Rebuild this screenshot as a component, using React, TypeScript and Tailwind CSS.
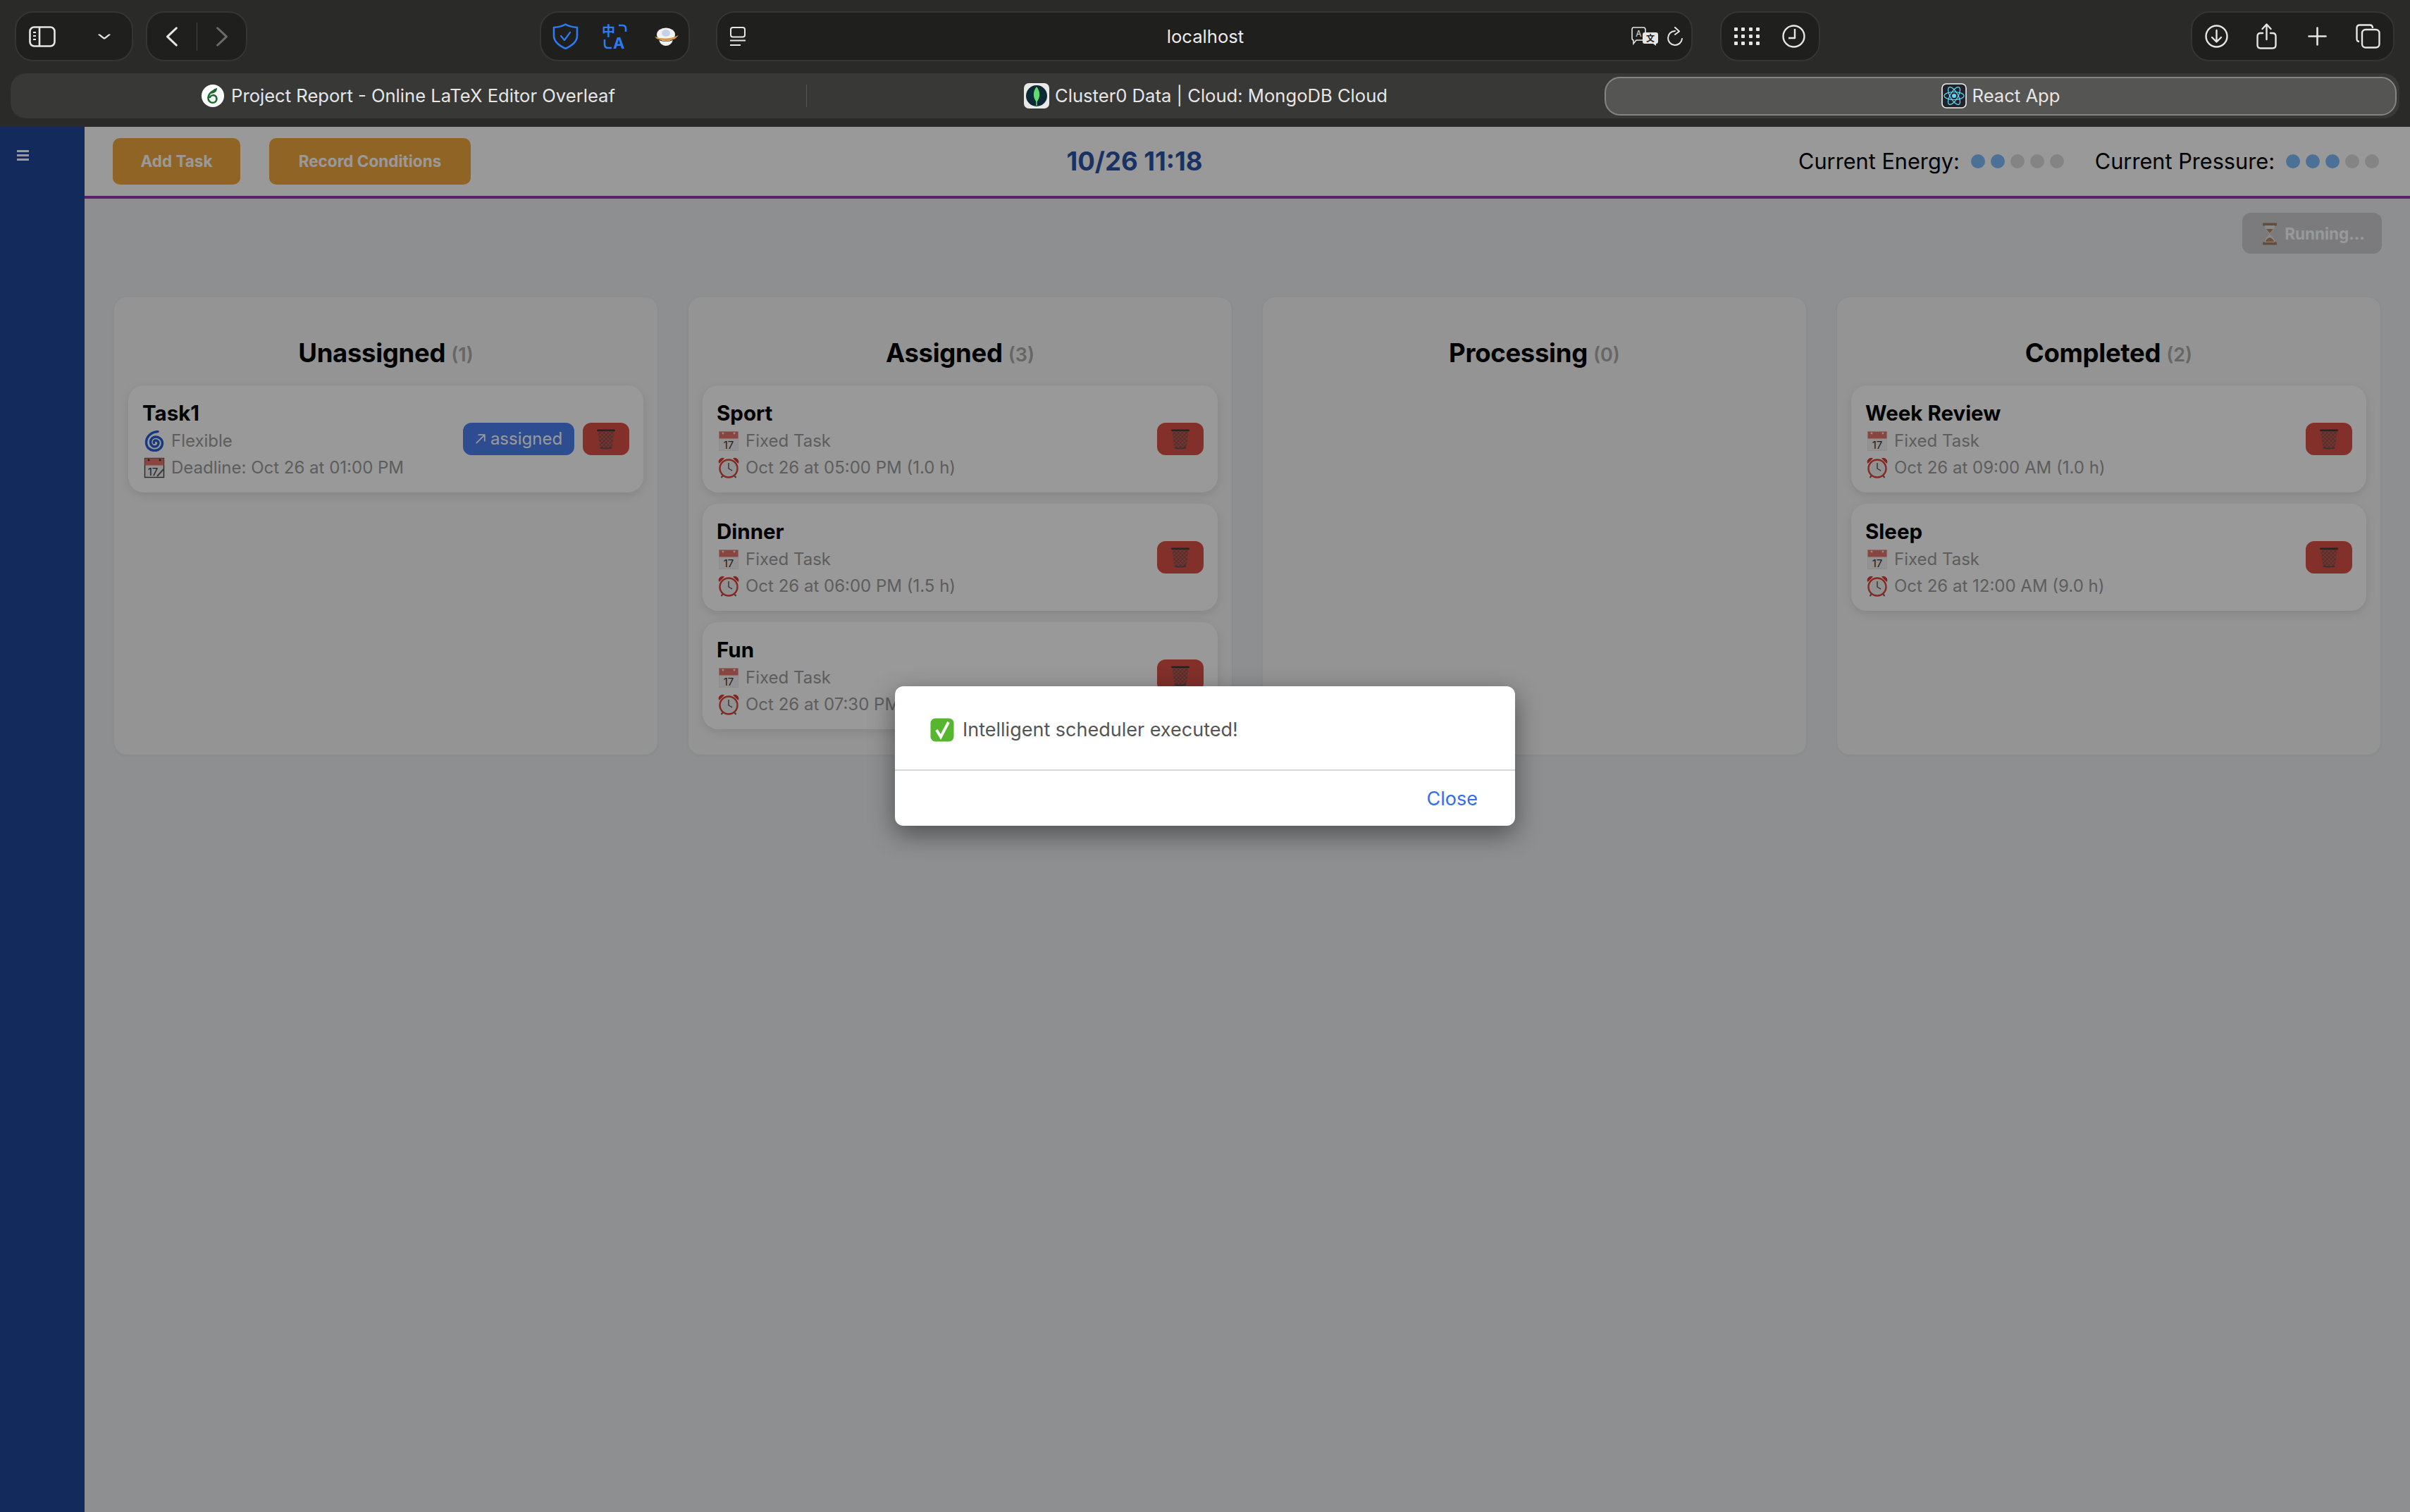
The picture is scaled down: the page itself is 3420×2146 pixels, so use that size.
import React from 'react';

const FONT = "font-['Inter','Liberation_Sans',sans-serif]";

/* ---------- emoji drawings (no colour emoji font is installed) ---------- */

const CalendarEmoji = ({ pen = false }: { pen?: boolean }) => (
  <svg viewBox="0 0 30 30" className="w-[30px] h-[30px] shrink-0 overflow-visible">
    <rect x="1.5" y="1.5" width="27" height="27" fill="#f4f4f4" stroke={pen ? '#444' : '#ddd'} strokeWidth={pen ? 1.4 : 0.5} />
    <rect x="1.5" y="1.5" width="27" height="10" fill="#e4746b" />
    <circle cx="7" cy="4" r="1.4" fill={pen ? '#333' : '#eee'} />
    <circle cx="23" cy="4" r="1.4" fill={pen ? '#333' : '#eee'} />
    <text x={pen ? 13 : 15} y="26" textAnchor="middle" fontSize="15" fontFamily="Inter" fill="#333">17</text>
    {pen && <path d="M19 27 L28 17" stroke="#666" strokeWidth="2" />}
  </svg>
);

const ClockEmoji = () => (
  <svg viewBox="0 0 30 30" className="w-[30px] h-[30px] shrink-0">
    <path d="M1.5 9 A5.5 5.5 0 0 1 9 1.5 Z M28.5 9 A5.5 5.5 0 0 0 21 1.5 Z" fill="#dc3a32" />
    <path d="M7 26 L4.5 29 M23 26 L25.5 29" stroke="#666" strokeWidth="2" />
    <circle cx="15" cy="16" r="12.5" fill="#f3f3f3" stroke="#e0433a" strokeWidth="2.4" />
    <path d="M15 8 V16 L20 19" fill="none" stroke="#444" strokeWidth="1.3" />
  </svg>
);

const SpiralEmoji = () => (
  <svg viewBox="0 0 30 30" className="w-[30px] h-[30px] shrink-0">
    <path d="M20 1.5 C10 2 3.5 9 3.5 17 C3.5 24 9 28.5 15.5 28.5 C22 28.5 26.5 23.5 26.5 18 C26.5 12.5 22 9 17 9 C12.5 9 9.5 12.5 9.5 16.5 C9.5 20.5 12.5 23 15.5 23 C18.5 23 21 20.5 21 18 C21 15.5 19 14 17 14 C15 14 14 15.5 14.5 17.5" fill="none" stroke="#2a5fd4" strokeWidth="3.4" strokeLinecap="round" />
  </svg>
);

const TrashEmoji = () => (
  <svg viewBox="0 0 28 30" className="w-[28px] h-[30px]">
    <defs>
      <pattern id="mesh" width="4" height="4" patternUnits="userSpaceOnUse" patternTransform="rotate(45)">
        <rect width="4" height="4" fill="#c9554e" />
        <path d="M0 0 H4 M0 0 V4" stroke="#4d4d4d" strokeWidth="1.2" />
      </pattern>
    </defs>
    <path d="M2 3 L5.5 28 Q14 30 22.5 28 L26 3 Z" fill="url(#mesh)" />
    <rect x="1" y="1.5" width="26" height="2.6" rx="1.2" fill="#3c3c3c" />
    <path d="M5.5 26.5 Q14 29 22.5 26.5 L22.3 28.4 Q14 30.5 5.7 28.4 Z" fill="#555" />
  </svg>
);

const CheckEmoji = () => (
  <svg viewBox="0 0 34 34" className="w-[34px] h-[34px] shrink-0">
    <rect x="0.5" y="0.5" width="33" height="33" rx="7" fill="#57b52f" />
    <path d="M9 17 L15 27 L26 6" fill="none" stroke="#fff" strokeWidth="4" />
  </svg>
);

const HourglassEmoji = () => (
  <svg viewBox="0 0 22 32" className="w-[22px] h-[32px] shrink-0">
    <rect x="1" y="0.5" width="20" height="4" rx="1" fill="#a08068" />
    <rect x="1" y="27.5" width="20" height="4" rx="1" fill="#a08068" />
    <path d="M4 4 H18 C18 12 12 13 12 16 C12 19 18 20 18 28 H4 C4 20 10 19 10 16 C10 13 4 12 4 4 Z" fill="#e4e4e4" />
    <path d="M6 9 H16 L11 15 Z M5 27 C6 23 9 22 11 21 C13 22 16 23 17 27 Z" fill="#b98a5c" />
  </svg>
);

/* ---------- browser chrome icons ---------- */

const SidebarIcon = () => (
  <svg viewBox="0 0 38 30" fill="none" stroke="#e6e6e6" strokeWidth="2.6" className="w-[38px] h-[30px]">
    <rect x="1.5" y="1.5" width="35" height="27" rx="6" />
    <path d="M15 1.5 V28.5" />
    <path d="M6 9 H10 M6 14 H10 M6 19 H10" strokeWidth="2" />
  </svg>
);

const Chevron = ({ d, color, w, h }: { d: string; color: string; w: string; h: string }) => (
  <svg viewBox="0 0 20 30" fill="none" stroke={color} strokeWidth="3.4" strokeLinecap="round" strokeLinejoin="round" preserveAspectRatio="none" className={`${w} ${h} shrink-0`}>
    <path d={d} />
  </svg>
);

const ShieldIcon = () => (
  <svg viewBox="0 0 37 37" fill="none" stroke="#2b7bf5" strokeWidth="2.6" strokeLinejoin="round" className="w-[37px] h-[37px]">
    <path d="M18.5 1.5 C24 5 29 5.5 35 6 V18 C35 27 27 32 18.5 36 C10 32 2 27 2 18 V6 C8 5.5 13 5 18.5 1.5 Z" />
    <path d="M12 18 L17 24 L25 13" strokeWidth="2.2" strokeLinecap="round" />
  </svg>
);

const TranslateBlue = () => (
  <svg viewBox="0 0 37 36" className="w-[37px] h-[36px] overflow-visible">
    <text x="0" y="17" fontSize="19" fontWeight="700" fontFamily="'Noto Sans CJK SC'" fill="#2b7bf5">中</text>
    <text x="16" y="35" fontSize="22" fontWeight="700" fontFamily="Inter" fill="#2b7bf5">A</text>
    <path d="M24 2 H30 Q34 2 34 7 V11" fill="none" stroke="#2b7bf5" strokeWidth="2.6" />
    <path d="M4 22 V29 Q4 34 9 34 H14" fill="none" stroke="#2b7bf5" strokeWidth="2.6" />
  </svg>
);

const BowlIcon = () => (
  <svg viewBox="0 0 36 26" className="w-[36px] h-[26px]">
    <ellipse cx="17" cy="10" rx="13" ry="9.5" fill="#f2f2f2" />
    <ellipse cx="17" cy="8" rx="6" ry="5" fill="#c3d2e6" />
    <path d="M1 13 Q18 19 35 11 Q30 17 27 17 Q18 21 7 17 Q3 16 1 13 Z" fill="#d99a3e" />
    <path d="M7 18 Q17 22 27 18 Q24 26 17 26 Q10 26 7 18 Z" fill="#f2f2f2" />
  </svg>
);

const ReaderIcon = () => (
  <svg viewBox="0 0 22 27" fill="none" stroke="#e6e6e6" strokeWidth="2" className="w-[22px] h-[27px] shrink-0">
    <rect x="1" y="1" width="20" height="13.5" rx="3" />
    <path d="M0 19.5 H22" />
    <path d="M0 26 H15" />
  </svg>
);

const TranslateBubbles = () => (
  <svg viewBox="0 0 39 27" className="w-[39px] h-[27px] shrink-0 overflow-visible">
    <path d="M3 1 H17 Q20 1 20 4 V16 Q20 19 17 19 H7 L3 24 V19 Q1 19 1 16 V4 Q1 1 3 1 Z" fill="#1f1f1e" stroke="#e6e6e6" strokeWidth="1.6" />
    <text x="10.5" y="14" textAnchor="middle" fontSize="12" fontFamily="Inter" fill="#e6e6e6">A</text>
    <path d="M19 8 H35 Q38 8 38 11 V21 Q38 24 35 24 V27 L31 24 H19 Q16 24 16 21 V11 Q16 8 19 8 Z" fill="#e6e6e6" />
    <text x="27" y="21" textAnchor="middle" fontSize="12" fontFamily="'Noto Sans CJK SC'" fontWeight="700" fill="#1f1f1e">文</text>
  </svg>
);

const ReloadIcon = () => (
  <svg viewBox="0 0 24 28" fill="none" stroke="#e6e6e6" strokeWidth="2" strokeLinecap="round" strokeLinejoin="round" className="w-[24px] h-[28px]">
    <path d="M12 6 A10 10 0 1 0 22 17" />
    <path d="M14 1 L20 6.5 L14 11" transform="translate(-2 0)" />
  </svg>
);

const GridIcon = () => (
  <div className="grid grid-cols-4 gap-x-[5px] gap-y-[5px] w-[36px]">
    {Array.from({ length: 12 }).map((_, i) => (
      <div key={i} className="w-[5px] h-[5px] bg-[#e6e6e6] rounded-[1px]" />
    ))}
  </div>
);

const ClockIcon = () => (
  <svg viewBox="0 0 33 33" fill="none" stroke="#e6e6e6" strokeWidth="2.4" strokeLinejoin="round" className="w-[33px] h-[33px]">
    <circle cx="16.5" cy="16.5" r="15" />
    <path d="M18 6 V19 H9" />
  </svg>
);

const DownloadIcon = () => (
  <svg viewBox="0 0 33 33" fill="none" stroke="#e6e6e6" strokeWidth="2.4" strokeLinecap="round" strokeLinejoin="round" className="w-[33px] h-[33px]">
    <circle cx="16.5" cy="16.5" r="15" />
    <path d="M16.5 8 V24 M10 18 L16.5 24.5 L23 18" />
  </svg>
);

const ShareIcon = () => (
  <svg viewBox="0 0 29 37" fill="none" stroke="#e6e6e6" strokeWidth="2.4" strokeLinecap="round" strokeLinejoin="round" className="w-[29px] h-[37px]">
    <path d="M9 14 H6 Q1.5 14 1.5 18.5 V31 Q1.5 35.5 6 35.5 H23 Q27.5 35.5 27.5 31 V18.5 Q27.5 14 23 14 H20" />
    <path d="M14.5 23 V2 M8.5 8 L14.5 1.5 L20.5 8" />
  </svg>
);

const PlusIcon = () => (
  <svg viewBox="0 0 27 27" fill="none" stroke="#e6e6e6" strokeWidth="2.6" strokeLinecap="round" className="w-[27px] h-[27px]">
    <path d="M13.5 1.5 V25.5 M1.5 13.5 H25.5" />
  </svg>
);

const TabsIcon = () => (
  <svg viewBox="0 0 35 35" fill="none" stroke="#e6e6e6" strokeWidth="2.4" className="w-[35px] h-[35px]">
    <path d="M5 25 Q1.5 25 1.5 21 V5.5 Q1.5 1.5 6 1.5 H20 Q24 1.5 24 6" />
    <rect x="9" y="8" width="24.5" height="25.5" rx="5" />
  </svg>
);

const OverleafIcon = () => (
  <svg viewBox="0 0 32 32" className="w-[32px] h-[32px] shrink-0">
    <circle cx="16" cy="16" r="16" fill="#fff" />
    <path d="M21 8 C14 9 9 14 9.5 20 C10 25 15 27 19 25 C23 22 22 16 17 15 C14 15 12 17 12 19" fill="none" stroke="#1d6b32" strokeWidth="2.5" />
    <path d="M14 13 C14 9 17 6 22 5 C22 10 19 12 14 13 Z" fill="#1d6b32" />
  </svg>
);

const MongoIcon = () => (
  <svg viewBox="0 0 36 36" className="w-[36px] h-[36px] shrink-0">
    <rect width="36" height="36" rx="7" fill="#e9e9e9" />
    <circle cx="18" cy="18" r="15" fill="#0c2a35" />
    <path d="M18 5 C23 11 24 20 18 27 C12 20 13 11 18 5 Z" fill="#5fdc6d" />
    <path d="M18 24 V32" stroke="#5fdc6d" strokeWidth="1.5" />
  </svg>
);

const ReactIcon = () => (
  <svg viewBox="0 0 36 36" className="w-[36px] h-[36px] shrink-0">
    <rect x="1" y="1" width="34" height="34" rx="6" fill="#20232a" stroke="#f2f2f2" strokeWidth="1.6" />
    <g fill="none" stroke="#61dafb" strokeWidth="1.2">
      <ellipse cx="18" cy="18" rx="14" ry="5.5" />
      <ellipse cx="18" cy="18" rx="14" ry="5.5" transform="rotate(60 18 18)" />
      <ellipse cx="18" cy="18" rx="14" ry="5.5" transform="rotate(120 18 18)" />
    </g>
    <circle cx="18" cy="18" r="3" fill="#61dafb" />
  </svg>
);

const Pill = ({ className, children }: { className: string; children: React.ReactNode }) => (
  <div className={`flex items-center h-[71px] rounded-[26px] bg-[#1f1f1e] border-2 border-[#353534] ${className}`}>{children}</div>
);

const BrowserChrome = () => (
  <div className="h-[180px] bg-[#2a2a29] flex flex-col shrink-0">
    <div className="flex items-start pt-[16px] pl-[21px] h-[104px]">
      <Pill className="w-[168px] ml-0 pl-[18px]">
        <SidebarIcon />
        <div className="ml-[60px]"><Chevron d="M2 8 L10 22 L18 8" color="#e6e6e6" w="w-[18px]" h="h-[12px]" /></div>
      </Pill>
      <Pill className="w-[144px] ml-[18px] pl-[26px]">
        <Chevron d="M18 2 L3 15 L18 28" color="#e6e6e6" w="w-[17px]" h="h-[28px]" />
        <div className="w-[1px] h-[40px] bg-[#454544] ml-[27px]" />
        <div className="ml-[27px]"><Chevron d="M2 2 L17 15 L2 28" color="#6b6b6a" w="w-[17px]" h="h-[28px]" /></div>
      </Pill>
      <Pill className="w-[213px] ml-[415px] pl-[16px]">
        <ShieldIcon />
        <div className="ml-[33px]"><TranslateBlue /></div>
        <div className="ml-[37px]"><BowlIcon /></div>
      </Pill>
      <Pill className="w-[1386px] ml-[37px] pl-[18px] relative">
        <ReaderIcon />
        <span className="flex-1 text-center text-[25.6px] text-[#ececec] pl-[48px] pt-[1px]">localhost</span>
        <TranslateBubbles />
        <div className="ml-[11px] mr-[11px]"><ReloadIcon /></div>
      </Pill>
      <Pill className="w-[142px] ml-[39px] pl-[18px]">
        <GridIcon />
        <div className="ml-[32px]"><ClockIcon /></div>
      </Pill>
      <Pill className="w-[289px] ml-[526px] pl-[18px]">
        <DownloadIcon />
        <div className="ml-[40px]"><ShareIcon /></div>
        <div className="ml-[44px]"><PlusIcon /></div>
        <div className="ml-[41px]"><TabsIcon /></div>
      </Pill>
    </div>
    <div className="flex items-center h-[64px] ml-[15px] mr-[15px] rounded-[22px] bg-[#383837] text-[25.6px] text-[#e6e6e6]">
      <div className="w-[1130px] h-[32px] flex items-center justify-center gap-[10px] border-r border-[#555554]">
        <OverleafIcon />
        <span className="pt-[1px]">Project Report - Online LaTeX Editor Overleaf</span>
      </div>
      <div className="w-[1132px] flex items-center justify-center gap-[8px]">
        <MongoIcon />
        <span className="pt-[1px]">Cluster0 Data | Cloud: MongoDB Cloud</span>
      </div>
      <div className="w-[1124px] h-[55px] flex items-center justify-center gap-[8px] rounded-[22px] bg-[#555554] border-2 border-[#858584]">
        <ReactIcon />
        <span className="pt-[1px]">React App</span>
      </div>
    </div>
  </div>
);

/* ---------- the app ---------- */

const Dots = ({ on }: { on: number }) => (
  <div className="flex gap-[8px]">
    {[0, 1, 2, 3, 4].map((i) => (
      <div key={i} className={i < on ? 'w-[20px] h-[20px] rounded-full bg-[#7fbdfa]' : 'w-[20px] h-[20px] rounded-full bg-[#dddddd]'} />
    ))}
  </div>
);

const Header = () => (
  <div className="h-[102px] shrink-0 bg-white border-b-4 border-[#9834b2] flex items-center justify-between pl-[40px] pr-[44px]">
    <div className="flex gap-[41px]">
      <button className="w-[181px] h-[66px] rounded-[10px] bg-[#f0a73c] text-white text-[22.5px] font-bold">Add Task</button>
      <button className="w-[286px] h-[66px] rounded-[10px] bg-[#f0a73c] text-white text-[22.5px] font-bold">Record Conditions</button>
    </div>
    <div className="text-[36.5px] font-bold text-[#2c52a6]">10/26 11:18</div>
    <div className="flex items-center text-[30.7px] text-black">
      <span>Current Energy:</span>
      <div className="ml-[16px]"><Dots on={2} /></div>
      <span className="ml-[44px]">Current Pressure:</span>
      <div className="ml-[16px]"><Dots on={3} /></div>
    </div>
  </div>
);

type Task = { title: string; kind: 'flex' | 'fixed'; when: string; assign?: boolean };

const TaskCard = ({ task }: { task: Task }) => (
  <div className="h-[152px] rounded-[22px] bg-white shadow-[0_4px_14px_rgba(0,0,0,0.1)] flex items-center pl-[20px] pr-[20px]">
    <div className="flex-1 min-w-0 pt-[5px]">
      <div className="text-[29.5px] leading-[36px] font-bold text-black">{task.title}</div>
      <div className="flex items-center gap-[9px] h-[38px] mt-[3px] ml-[2px] text-[24px] text-[#9c9c9c]">
        {task.kind === 'flex' ? <SpiralEmoji /> : <CalendarEmoji />}
        <span>{task.kind === 'flex' ? 'Flexible' : 'Fixed Task'}</span>
      </div>
      <div className="flex items-center gap-[9px] h-[38px] ml-[2px] text-[24px] text-[#9c9c9c]">
        {task.kind === 'flex' ? <CalendarEmoji pen /> : <ClockEmoji />}
        <span>{task.when}</span>
      </div>
    </div>
    {task.assign && (
      <button className="w-[158px] h-[46px] mr-[12px] rounded-[12px] bg-[#4e80f0] text-white text-[24px] flex items-center justify-center gap-[6px]">
        <svg viewBox="0 0 18 18" fill="none" stroke="#fff" strokeWidth="2" className="w-[16px] h-[16px]">
          <path d="M2 16 L15 3 M5 2.5 H15.5 V13" />
        </svg>
        assigned
      </button>
    )}
    <button className="w-[66px] h-[46px] rounded-[12px] bg-[#da5049] flex items-center justify-center">
      <TrashEmoji />
    </button>
  </div>
);

const Column = ({ title, tasks }: { title: string; tasks: Task[] }) => (
  <div className="rounded-[18px] bg-[#f7f7f7] px-[20px] pt-[57px] pb-[36px] shadow-[0_1px_4px_rgba(0,0,0,0.05)]">
    <div className="h-[45px] mb-[23px] flex items-center justify-center gap-[8px]">
      <span className="text-[36.5px] font-bold tracking-[-0.3px] text-black">{title}</span>
      <span className="text-[27px] font-semibold text-[#aaaaaa] mt-[6px]">({tasks.length})</span>
    </div>
    <div className="flex flex-col gap-[16px]">
      {tasks.map((t) => (
        <TaskCard key={t.title} task={t} />
      ))}
    </div>
  </div>
);

const columns: { title: string; tasks: Task[] }[] = [
  { title: 'Unassigned', tasks: [{ title: 'Task1', kind: 'flex', when: 'Deadline: Oct 26 at 01:00 PM', assign: true }] },
  {
    title: 'Assigned',
    tasks: [
      { title: 'Sport', kind: 'fixed', when: 'Oct 26 at 05:00 PM (1.0 h)' },
      { title: 'Dinner', kind: 'fixed', when: 'Oct 26 at 06:00 PM (1.5 h)' },
      { title: 'Fun', kind: 'fixed', when: 'Oct 26 at 07:30 PM (1.5 h)' },
    ],
  },
  { title: 'Processing', tasks: [] },
  {
    title: 'Completed',
    tasks: [
      { title: 'Week Review', kind: 'fixed', when: 'Oct 26 at 09:00 AM (1.0 h)' },
      { title: 'Sleep', kind: 'fixed', when: 'Oct 26 at 12:00 AM (9.0 h)' },
    ],
  },
];

export default function App() {
  return (
    <div className={`w-[3420px] h-[2146px] flex flex-col overflow-hidden ${FONT}`}>
      <BrowserChrome />
      <div className="relative flex-1 flex min-h-0">
        {/* sidebar */}
        <div className="w-[120px] shrink-0 bg-[#1e4699] pl-[24px] pt-[33px]">
          <div className="flex flex-col gap-[3px] w-[17px]">
            <div className="h-[3px] bg-white" />
            <div className="h-[3px] bg-white" />
            <div className="h-[3px] bg-white" />
          </div>
        </div>

        <div className="flex-1 flex flex-col bg-[#eceef2]">
          <Header />
          <div className="flex justify-end pr-[40px] pt-[20px]">
            <button className="w-[198px] h-[58px] rounded-[12px] bg-[#cdcdd0] text-white text-[22.5px] font-bold flex items-center justify-center gap-[10px] pl-[4px] pt-[1px]">
              <HourglassEmoji />
              Running...
            </button>
          </div>
          <div className="grid grid-cols-4 gap-[44px] px-[42px] mt-[62px]">
            {columns.map((c) => (
              <Column key={c.title} title={c.title} tasks={c.tasks} />
            ))}
          </div>
        </div>

        {/* modal backdrop */}
        <div className="absolute inset-0 bg-black/40 flex justify-center items-start pt-[794px]">
          <div className="w-[880px] h-[198px] rounded-[12px] bg-white shadow-[0_12px_36px_rgba(0,0,0,0.45)] flex flex-col">
            <div className="h-[120px] border-b-2 border-[#d8d8d8] flex items-center pl-[50px] pt-[6px] gap-[12px] text-[27px] text-[#555555]">
              <CheckEmoji />
              <span>Intelligent scheduler executed!</span>
            </div>
            <div className="flex-1 flex items-center justify-end pr-[53px] pt-[2px] text-[27px] text-[#2f6ff0]">Close</div>
          </div>
        </div>
      </div>
    </div>
  );
}
